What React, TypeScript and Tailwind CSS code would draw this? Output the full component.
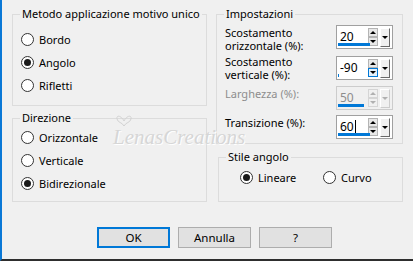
import React from "react";

const font = { fontFamily: '"Noto Sans", "Segoe UI", sans-serif' };

const Radio = ({ label, checked }: { label: string; checked?: boolean }) => (
  <div className="flex items-center gap-[5px] h-[13px]">
    <span className="w-[13px] h-[13px] rounded-full border border-[#333333] bg-white flex items-center justify-center shrink-0">
      {checked && <span className="w-[7px] h-[7px] rounded-full bg-[#1a1a1a]" />}
    </span>
    <span className="leading-[16px] whitespace-nowrap">{label}</span>
  </div>
);

const GroupBox = ({
  title,
  className,
  children,
}: {
  title: string;
  className: string;
  children: React.ReactNode;
}) => (
  <div className={`relative border border-[#dcdcdc] ${className}`}>
    <span className="absolute left-[7px] -top-[9px] px-[2px] bg-[#f0f0f0] leading-[16px] whitespace-nowrap">
      {title}
    </span>
    {children}
  </div>
);

const Tri = ({ up, gray }: { up?: boolean; gray?: boolean }) => (
  <span
    className={
      up
        ? `w-0 h-0 border-x-[3px] border-x-transparent border-b-[3px] ${gray ? "border-b-[#b0b0b0]" : "border-b-black"}`
        : `w-0 h-0 border-x-[3px] border-x-transparent border-t-[3px] ${gray ? "border-t-[#b0b0b0]" : "border-t-black"}`
    }
  />
);

const Spin = ({
  value,
  bar,
  disabled,
  caret,
  hoverDown,
}: {
  value: string;
  bar: number;
  disabled?: boolean;
  caret?: boolean;
  hoverDown?: boolean;
}) => (
  <div
    className={`relative w-[57px] h-[24px] border flex ${
      disabled ? "border-[#cccccc] bg-[#f0f0f0]" : "border-[#a0a0a0] bg-white"
    }`}
  >
    <div
      className={`w-[31px] pl-[3px] flex items-center leading-[16px] text-[12px] ${
        disabled ? "text-[#8d8d8d]" : "text-black"
      }`}
    >
      {value}
      {caret && <span className="w-[1px] h-[15px] bg-black ml-[1px]" />}
    </div>
    <div className="w-[10px] mt-[2px] flex flex-col">
      <div
        className={`h-[9px] border flex items-center justify-center ${
          disabled ? "border-[#d5d5d5] bg-[#f0f0f0]" : "border-[#b4b4b4] bg-[#e8e8e8]"
        }`}
      >
        <Tri up gray={disabled} />
      </div>
      <div
        className={`h-[9px] border flex items-center justify-center ${
          hoverDown
            ? "border-[#0078d7] bg-[#e5f1fb]"
            : disabled
            ? "border-[#d5d5d5] bg-[#f0f0f0]"
            : "border-[#b4b4b4] bg-[#e8e8e8]"
        }`}
      >
        <Tri gray={disabled} />
      </div>
    </div>
    <div
      className={`ml-[2px] mt-[2px] w-[10px] h-[19px] border-l border-t border-l-white border-t-white border-r border-b flex items-center justify-center bg-[#f0f0f0] ${
        disabled ? "border-r-[#cccccc] border-b-[#cccccc]" : "border-r-[#696969] border-b-[#696969]"
      }`}
    >
      <Tri gray={disabled} />
    </div>
    <div className="absolute left-[1px] bottom-[2px] h-[3px] bg-[#0078d7]" style={{ width: bar }} />
  </div>
);

const Btn = ({ label, primary }: { label: string; primary?: boolean }) => (
  <button
    className={`w-[73px] h-[21px] flex items-center justify-center bg-[#e1e1e1] text-black leading-[16px] text-[11.5px] ${
      primary ? "border-2 border-[#0078d7]" : "border border-[#adadad]"
    }`}
  >
    {label}
  </button>
);

export default function App() {
  return (
    <div
      className="relative w-[413px] h-[261px] bg-[#f0f0f0] border-l-2 border-l-[#0a78d6] border-b-2 border-b-[#2e2e2e] pl-[10px] pt-[14px] text-[11px] text-black overflow-hidden"
      style={font}
    >
      <div className="flex">
        <div className="w-[195px] flex flex-col">
          <GroupBox title="Metodo applicazione motivo unico" className="h-[92px] pt-[18px] pl-[8px]">
            <div className="flex flex-col gap-[10px]">
              <Radio label="Bordo" />
              <Radio label="Angolo" checked />
              <Radio label="Rifletti" />
            </div>
          </GroupBox>
          <GroupBox title="Direzione" className="mt-[12px] h-[84px] pt-[12px] pl-[8px]">
            <div className="flex flex-col gap-[10px]">
              <Radio label="Orizzontale" />
              <Radio label="Verticale" />
              <Radio label="Bidirezionale" checked />
            </div>
          </GroupBox>
        </div>
        <div className="ml-[9px] w-[187px] flex flex-col">
          <GroupBox title="Impostazioni" className="h-[130px] pt-[10px] pl-[8px]">
            <div className="flex items-start">
              <div className="w-[111px] leading-[13px] pt-[1px]">
                Scostamento
                <br />
                orizzontale (%):
              </div>
              <Spin value="20" bar={32} />
            </div>
            <div className="flex items-start mt-[4px]">
              <div className="w-[111px] leading-[13px] -mt-[1px]">
                Scostamento
                <br />
                verticale (%):
              </div>
              <Spin value="-90" bar={1} hoverDown />
            </div>
            <div className="flex items-start mt-[5px]">
              <div className="w-[111px] leading-[16px] text-[#8d8d8d]">Larghezza (%):</div>
              <Spin value="50" bar={26} disabled />
            </div>
            <div className="flex items-start mt-[5px]">
              <div className="w-[111px] leading-[16px]">Transizione (%):</div>
              <Spin value="60" bar={32} caret />
            </div>
          </GroupBox>
          <GroupBox title="Stile angolo" className="mt-[13px] ml-[2px] w-[185px] h-[45px] pt-[13px] pl-[21px]">
            <div className="flex">
              <div className="w-[83px]">
                <Radio label="Lineare" checked />
              </div>
              <Radio label="Curvo" />
            </div>
          </GroupBox>
        </div>
      </div>
      <div className="mt-[25px] ml-[85px] flex gap-[8px]">
        <Btn label="OK" primary />
        <Btn label="Annulla" />
        <Btn label="?" />
      </div>
      <div className="absolute left-[111px] top-[114px] pointer-events-none select-none">
        <svg width="16" height="14" viewBox="0 0 16 14" className="ml-[3px]">
          <path
            d="M8 12 C6 8 2 9 1 5 C0 1 5 1 8 7 C11 1 16 1 15 5 C14 9 10 8 8 12 Z"
            fill="none"
            stroke="#d2d2d2"
            strokeWidth="1"
          />
        </svg>
        <div
          className="-mt-[2px] text-[21px] italic leading-[22px] text-[#d6d6d6] whitespace-nowrap"
          style={{ fontFamily: '"Liberation Serif", serif', textShadow: "1px 1px 0 #ffffff" }}
        >
          LenasCreations
        </div>
      </div>
    </div>
  );
}
